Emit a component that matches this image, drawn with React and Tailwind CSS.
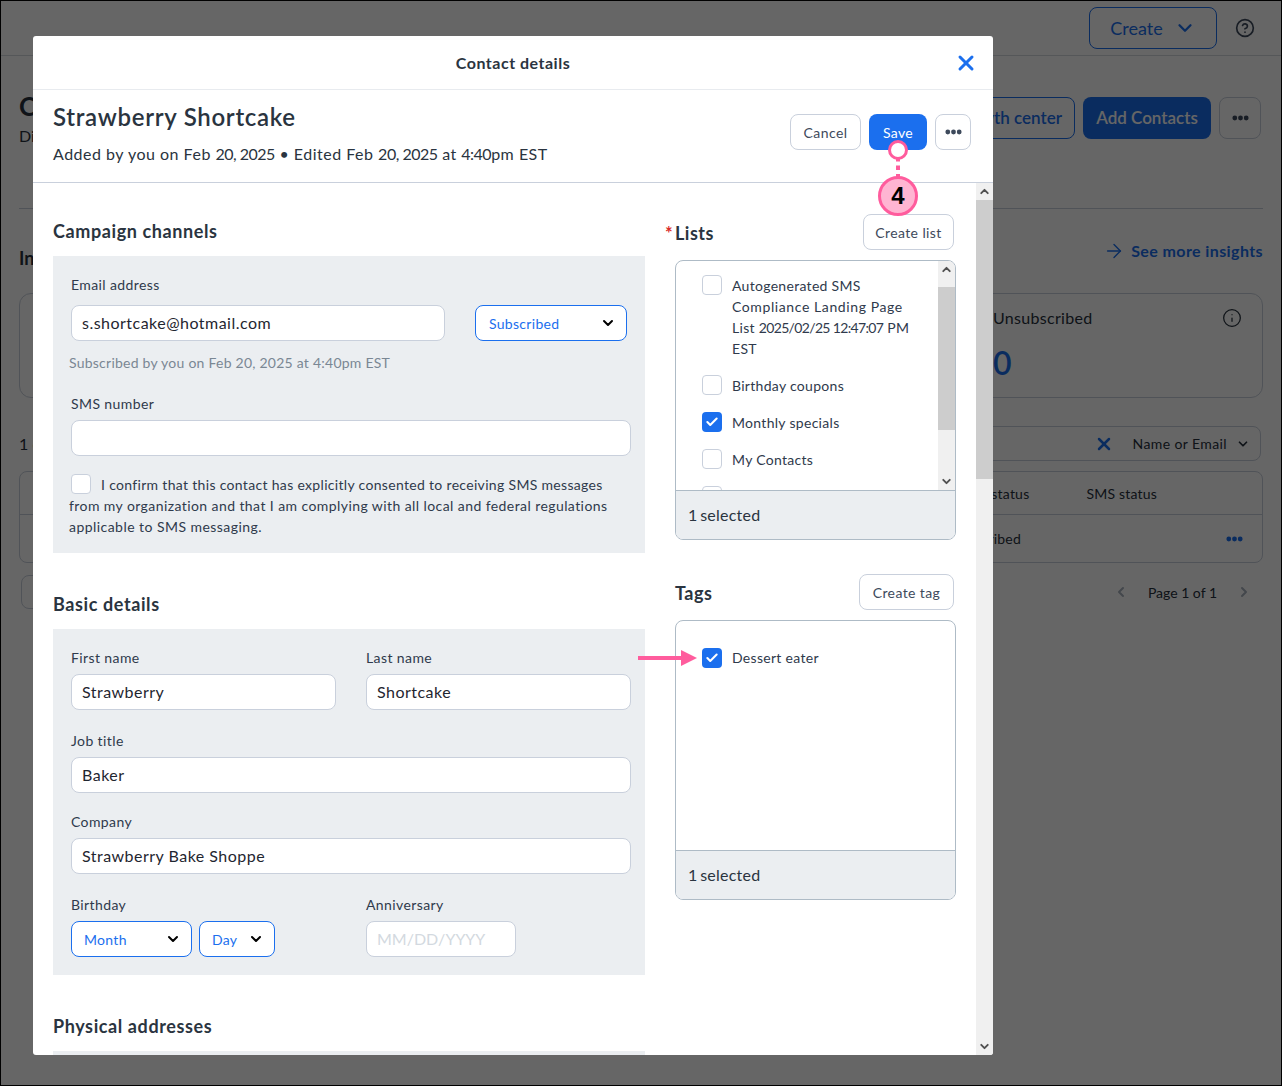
import React from "react";
import { ChevronDown, ChevronUp, ChevronLeft, ChevronRight, X, Check, Info, CircleHelp, ArrowRight } from "lucide-react";

function Dots({ className }) {
  return (
    <svg width="17" height="6" viewBox="0 0 17 6" className={className} fill="currentColor">
      <circle cx="2.8" cy="3" r="2.4" />
      <circle cx="8.5" cy="3" r="2.4" />
      <circle cx="14.2" cy="3" r="2.4" />
    </svg>
  );
}

function Label({ children }) {
  return <div className="h-5 text-[14px] leading-5 tracking-[0.4px] text-[#2f3a4c]">{children}</div>;
}

function Input({ value, className = "" }) {
  return (
    <div className={`h-9 rounded-lg border border-[#c9d0dc] bg-white px-[10px] text-[16px] leading-[34px] tracking-[0.48px] text-[#1f2630] ${className}`}>
      {value}
    </div>
  );
}

function Select({ value, className = "", pad = "pl-3" }) {
  return (
    <div className={`flex h-9 items-center justify-between rounded-lg border border-[#1b6fee] bg-white pr-[10px] text-[14px] tracking-[0.3px] text-[#1b6fee] ${pad} ${className}`}>
      <span>{value}</span>
      <ChevronDown size={16} strokeWidth={3} className="text-black" />
    </div>
  );
}

function Btn({ children, className = "" }) {
  return (
    <div className={`flex h-9 items-center justify-center rounded-lg border border-[#c9d0dc] bg-white text-[14px] tracking-[0.4px] text-[#3e4a5c] ${className}`}>
      {children}
    </div>
  );
}

function Box({ checked }) {
  return checked ? (
    <span className="flex h-5 w-5 shrink-0 items-center justify-center rounded-[4px] bg-[#1b6fee] text-white">
      <Check size={14} strokeWidth={3.5} />
    </span>
  ) : (
    <span className="block h-5 w-5 shrink-0 rounded-[4px] border border-[#c9d0dc] bg-white" />
  );
}

function Item({ checked, children, className = "" }) {
  return (
    <div className={`flex gap-[10px] pl-[26px] text-[14px] leading-[21px] tracking-[0.3px] text-[#2f3a4c] ${className}`}>
      <Box checked={checked} />
      {children ? <span>{children}</span> : null}
    </div>
  );
}

function Heading({ children }) {
  return <h2 className="h-6 text-[18px] font-bold leading-6 tracking-[0.6px] text-[#2a3440]">{children}</h2>;
}

function Num({ children, className = "tracking-[-0.5px]" }) {
  return <span className={className}>{children}</span>;
}

function Selected() {
  return (
    <div className="flex h-[49px] shrink-0 items-center border-t border-[#aebbc6] bg-[#ebeef1] pl-3 text-[16px] tracking-[0.25px] text-[#2a3440]">
      <span className="tracking-[-1.5px]">1 </span>&nbsp;selected
    </div>
  );
}

function Scrollbar({ thumbClass }) {
  return (
    <div className="flex w-[17px] shrink-0 flex-col bg-[#f0f0f0]">
      <div className="flex h-[17px] items-center justify-center text-[#505050]">
        <ChevronUp size={13} strokeWidth={3.5} />
      </div>
      <div className={`bg-[#cdcdcd] ${thumbClass}`} />
      <div className="flex-1" />
      <div className="flex h-[17px] items-center justify-center text-[#505050]">
        <ChevronDown size={13} strokeWidth={3.5} />
      </div>
    </div>
  );
}

function Background() {
  return (
    <div className="h-full text-[#26303c]">
      <header className="flex h-[55px] items-center justify-end border-b border-[#d5d9df] pr-[26px]">
        <div className="mr-[18px] flex h-[42px] w-[128px] items-center justify-center gap-[11px] rounded-lg border border-[#1b6fee] text-[18px] text-[#1b6fee]">
          Create <ChevronDown size={22} strokeWidth={2.5} />
        </div>
        <CircleHelp size={20} className="text-[#3e4a5c]" />
      </header>
      <main className="px-[18px]">
        <div className="flex h-[153px] items-start justify-between border-b border-[#c9d0dc] pr-[2px] pt-[34px]">
          <div>
            <div className="text-[26px] font-bold leading-8">Contacts</div>
            <div className="mt-[4px] text-[16px] leading-5">Display</div>
          </div>
          <div className="mt-[7px] flex gap-2">
            <div className="flex h-[42px] w-[200px] items-center justify-end rounded-lg border border-[#1b6fee] pr-3 text-[17px] font-semibold text-[#1b6fee]">Growth center</div>
            <div className="flex h-[42px] w-[128px] items-center justify-center rounded-lg bg-[#1b6fee] text-[17px] font-semibold text-white">Add Contacts</div>
            <div className="flex h-[42px] w-[42px] items-center justify-center rounded-lg border border-[#c9d0dc] text-[#3e4a5c]"><Dots /></div>
          </div>
        </div>
        <div className="flex h-[84px] justify-between">
          <div className="pt-[37px] text-[18px] font-bold leading-6">Insights</div>
          <div className="flex items-center gap-[6px] text-[16px] font-bold tracking-[0.4px] text-[#1b6fee]">
            <ArrowRight size={22} strokeWidth={1.5} /> See more insights
          </div>
        </div>
        <div className="flex h-[105px] gap-4">
          <div className="flex-1 rounded-xl border border-[#c9d0dc]" />
          <div className="relative w-[288px] rounded-xl border border-[#c9d0dc] pl-[17px] pt-[12px]">
            <div className="text-[16px] leading-6 tracking-[0.3px]">Unsubscribed</div>
            <div className="mt-[15px] text-[32px] font-semibold leading-9 text-[#1b6fee]">0</div>
            <Info size={20} strokeWidth={1.5} className="absolute right-[20px] top-[14px]" />
          </div>
        </div>
        <div className="mt-[28px] flex h-[35px] items-center justify-between pr-[2px]">
          <span className="text-[16px]">1 contact</span>
          <div className="flex h-[35px] w-[400px] items-center justify-end rounded-lg border border-[#c9d0dc] pr-[10px] text-[14px] tracking-[0.4px]">
            <X size={20} strokeWidth={3} className="mr-[19px] text-[#1b6fee]" />
            Name or Email
            <ChevronDown size={14} strokeWidth={3} className="ml-[9px]" />
          </div>
        </div>
        <div className="mt-[10px] h-[92px] rounded-lg border border-[#c9d0dc] text-[14px] tracking-[0.2px]">
          <div className="flex h-[43px] items-center justify-end border-b border-[#c9d0dc] pr-[105px]">
            <span className="mr-[57px]">Email status</span>
            <span>SMS status</span>
          </div>
          <div className="flex h-[47px] items-center justify-end pr-[19px]">
            <span className="mr-[205px]">Unsubscribed</span>
            <Dots className="text-[#1b6fee]" />
          </div>
        </div>
        <div className="mt-[12px] flex h-[34px] items-center justify-between pl-[2px]">
          <div className="h-[34px] w-[80px] rounded-lg border border-[#c9d0dc]" />
          <div className="flex items-center pr-[11px] text-[14px]">
            <ChevronLeft size={16} strokeWidth={3} className="text-[#a9b2bd]" />
            <span className="mx-[19px]">Page 1 of 1</span>
            <ChevronRight size={16} strokeWidth={3} className="text-[#a9b2bd]" />
          </div>
        </div>
      </main>
    </div>
  );
}

function Modal() {
  return (
    <div className="absolute left-[32px] top-[35px] flex h-[1019px] w-[960px] flex-col overflow-hidden rounded-[3px] bg-white">
      <div className="relative flex h-[54px] shrink-0 items-center justify-center border-b border-[#e8ebef] text-[16px] font-bold tracking-[0.5px] text-[#2a3440]">
        Contact details
        <X size={24} strokeWidth={3} className="absolute right-[15px] top-[15px] text-[#1b6fee]" />
      </div>
      <div className="flex h-[93px] shrink-0 justify-between border-b border-[#c9d0dc] pl-5 pr-[22px]">
        <div>
          <div className="mt-[12px] text-[24px] font-semibold leading-[30px] tracking-[0.7px] text-[#2a3440]">Strawberry Shortcake</div>
          <div className="mt-[10px] text-[16px] leading-6 tracking-[0.5px] text-[#2a3440]">
            Added by you on Feb <Num>20, 2025</Num> • Edited Feb <Num>20, 2025</Num> at <Num>4:40</Num>pm EST
          </div>
        </div>
        <div className="mt-[24px] flex gap-2">
          <Btn className="w-[71px]">Cancel</Btn>
          <div className="flex h-9 w-[58px] items-center justify-center rounded-lg bg-[#1b6fee] text-[14px] tracking-[0.3px] text-white">Save</div>
          <Btn className="w-9"><Dots className="text-[#3e4a5c]" /></Btn>
        </div>
      </div>
      <div className="flex min-h-0 flex-1">
        <div className="flex flex-1 gap-[30px] overflow-hidden pl-5">
          <div className="w-[592px] shrink-0">
            <div className="mt-[36px] mb-[13px]"><Heading>Campaign channels</Heading></div>
            <section className="h-[297px] bg-[#ebeef1] pl-4 pr-[14px] pt-[19px]">
              <div className="pl-[2px]">
                <Label>Email address</Label>
                <div className="mt-[10px] flex justify-between pr-[4px]">
                  <Input value="s.shortcake@hotmail.com" className="w-[374px]" />
                  <Select value="Subscribed" className="w-[152px]" pad="pl-[13px]" />
                </div>
              </div>
              <div className="mt-[12px] h-5 text-[14px] leading-5 tracking-[0.24px] text-[#7a8794]">Subscribed by you on Feb 20, 2025 at 4:40pm EST</div>
              <div className="mt-[21px] pl-[2px]">
                <Label>SMS number</Label>
                <Input className="mt-[6px] w-[560px]" />
              </div>
              <p className="mt-[18px] text-[14px] leading-[21px] tracking-[0.32px] text-[#2f3a4c]">
                <span className="ml-[2px] mr-[10px] inline-block h-5 w-5 rounded-[4px] border border-[#c9d0dc] bg-white align-top" />
                I confirm that this contact has explicitly consented to receiving SMS messages
                <br />
                <span className="tracking-[0.42px]">from my organization and that I am complying with all local and federal regulations</span>
                <br />
                <span className="tracking-[0.45px]">applicable to SMS messaging.</span>
              </p>
            </section>
            <div className="mt-[39px] mb-[13px]"><Heading>Basic details</Heading></div>
            <section className="h-[346px] bg-[#ebeef1] px-[18px] pt-[19px]">
              <div className="grid grid-cols-[265px_265px] gap-x-[30px]">
                <div><Label>First name</Label><Input value="Strawberry" className="mt-[6px]" /></div>
                <div><Label>Last name</Label><Input value="Shortcake" className="mt-[6px]" /></div>
              </div>
              <div className="mt-[21px]"><Label>Job title</Label><Input value="Baker" className="mt-[6px] w-[560px]" /></div>
              <div className="mt-[19px]"><Label>Company</Label><Input value="Strawberry Bake Shoppe" className="mt-[6px] w-[560px]" /></div>
              <div className="mt-[21px] grid grid-cols-[265px_265px] gap-x-[30px]">
                <div>
                  <Label>Birthday</Label>
                  <div className="mt-[6px] flex gap-[7px]">
                    <Select value="Month" className="w-[121px]" />
                    <Select value="Day" className="w-[76px]" />
                  </div>
                </div>
                <div>
                  <Label>Anniversary</Label>
                  <div className="mt-[6px] flex h-9 w-[150px] items-center rounded-lg border border-[#c9d0dc] bg-white px-[10px] text-[16px] text-[#d3d9e0]">MM/DD/YYYY</div>
                </div>
              </div>
            </section>
            <div className="mt-[39px] mb-[13px]"><Heading>Physical addresses</Heading></div>
            <section className="h-[120px] bg-[#ebeef1]" />
          </div>
          <div className="w-[281px] shrink-0">
            <div className="mt-[31px] mb-[10px] flex items-center justify-between pr-[2px]">
              <h2 className="relative pt-[2px] text-[18px] font-bold leading-6 tracking-[0.5px] text-[#2a3440]">
                <span className="absolute left-[-10px] top-[2px] text-[#d92b2b]">*</span>
                Lists
              </h2>
              <Btn className="w-[91px]">Create list</Btn>
            </div>
            <div className="flex h-[280px] flex-col overflow-hidden rounded-lg border border-[#aebbc6]">
              <div className="flex min-h-0 flex-1">
                <div className="min-w-0 flex-1 overflow-hidden pt-[14px]">
                  <Item>
                    Autogenerated SMS<br /><span className="tracking-[0.6px]">Compliance Landing Page</span><br />List <Num className="tracking-[-0.65px]">2025/02/25 12:47:07</Num> PM<br />EST
                  </Item>
                  <Item className="mt-[16px]">Birthday coupons</Item>
                  <Item checked className="mt-[16px]">Monthly specials</Item>
                  <Item className="mt-[16px]">My Contacts</Item>
                  <Item className="mt-[16px]" />
                </div>
                <Scrollbar thumbClass="mt-[9px] h-[143px]" />
              </div>
              <Selected />
            </div>
            <div className="mt-[34px] mb-[10px] flex items-center justify-between pr-[2px]">
              <h2 className="pt-[2px] text-[18px] font-bold leading-6 tracking-[0.5px] text-[#2a3440]">Tags</h2>
              <Btn className="w-[95px]">Create tag</Btn>
            </div>
            <div className="flex h-[280px] flex-col overflow-hidden rounded-lg border border-[#aebbc6]">
              <div className="min-h-0 flex-1 pt-[27px]">
                <Item checked><span className="block -mt-px">Dessert eater</span></Item>
              </div>
              <Selected />
            </div>
          </div>
        </div>
        <Scrollbar thumbClass="h-[279px]" />
      </div>
    </div>
  );
}

function Annotations() {
  return (
    <>
      <svg className="absolute left-[630px] top-[640px]" width="70" height="36" viewBox="0 0 70 36">
        <rect x="7" y="15" width="44" height="4" fill="#ff5c9d" />
        <polygon points="50,9 66,17 50,25" fill="#ff5c9d" />
      </svg>
      <svg className="absolute left-[879px] top-[138px]" width="36" height="80" viewBox="0 0 36 80">
        <line x1="18" y1="18" x2="18" y2="39" stroke="#ff5c9d" strokeWidth="4" strokeDasharray="4.5 4" />
        <circle cx="18" cy="11" r="8.5" fill="white" stroke="#ff5c9d" strokeWidth="3" />
      </svg>
      <div className="absolute left-[877px] top-[175px] flex h-10 w-10 items-center justify-center rounded-full border-[3px] border-[#ff5c9d] bg-[#ffb5d2] font-['Liberation_Sans',sans-serif] text-[24px] font-bold text-black">
        4
      </div>
    </>
  );
}

export default function App() {
  return (
    <div className="relative h-[1086px] w-[1282px] overflow-hidden border border-black bg-white font-['Lato',sans-serif]">
      <Background />
      <div className="absolute inset-0 bg-black/60" />
      <Modal />
      <Annotations />
    </div>
  );
}
